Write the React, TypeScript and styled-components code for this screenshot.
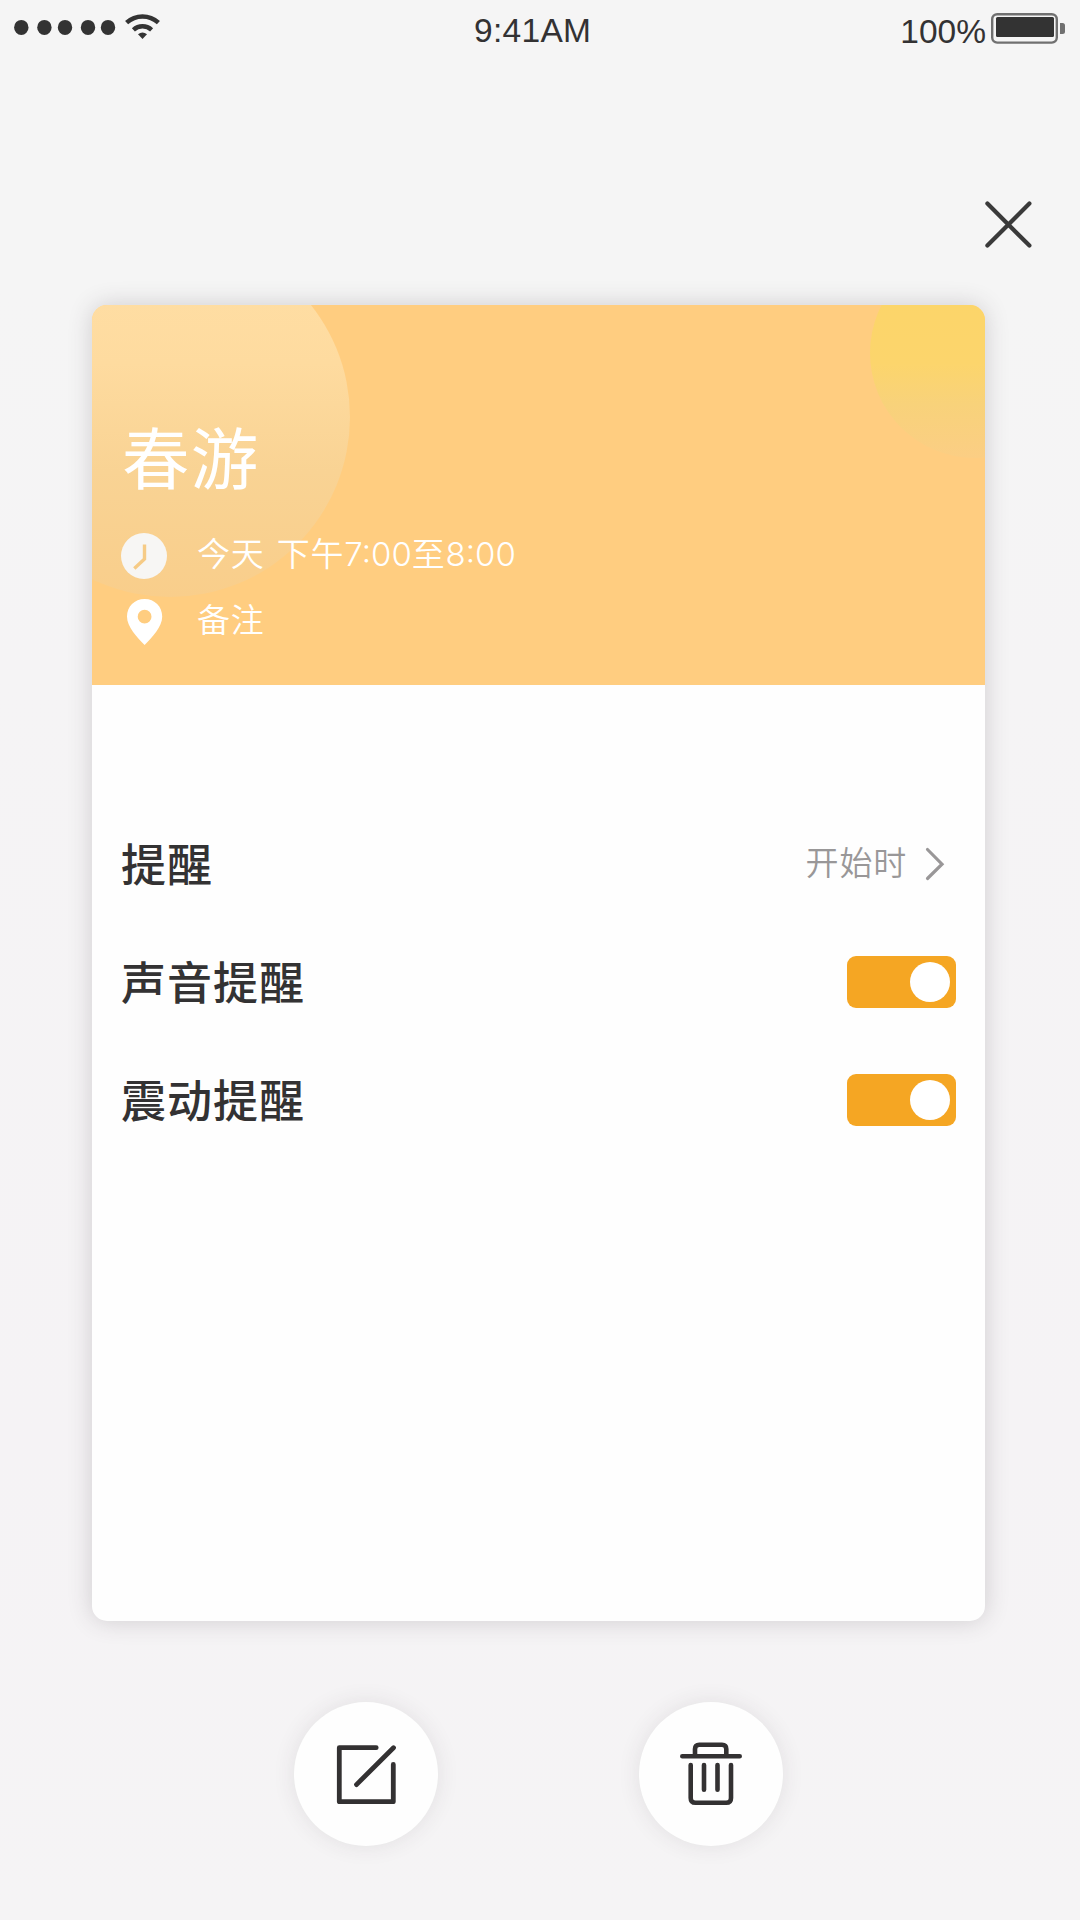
import React, { useState } from "react";
import styled, { createGlobalStyle } from "styled-components";

const GlobalStyle = createGlobalStyle`
  *, *::before, *::after { box-sizing: border-box; }
  body { margin: 0; background: #f5f5f5; }
  button { font: inherit; color: inherit; border: 0; padding: 0; background: none; cursor: pointer; }
  svg { display: block; flex: none; }
`;

const Screen = styled.div`
  width: 1080px;
  height: 1920px;
  display: flex;
  flex-direction: column;
  overflow: hidden;
  color: #333233;
  background: linear-gradient(180deg, #f5f5f5 0%, #f5f5f5 15%, #f5f4f5 35%, #f5f3f5 75%, #f5f4f5 100%);
  font-family: "Noto Sans CJK SC", sans-serif;
`;

const StatusBar = styled.header`
  height: 60px;
  padding: 0 14px 0 14px;
  display: grid;
  grid-template-columns: 460px 1fr auto;
  font: 33.5px/38px "Liberation Sans", Arial, sans-serif;
`;

const Clock = styled.div`
  padding-top: 12px;
  letter-spacing: 0.3px;
`;

const BatteryGroup = styled.div`
  display: flex;
  gap: 5px;
`;

const BatteryText = styled.span`
  padding-top: 13px;
`;

const BatteryIcon = styled.svg`
  margin-top: 13px;
`;

const CloseBar = styled.div`
  height: 245px;
  padding: 141px 48px 0 0;
  display: flex;
  justify-content: flex-end;
  align-items: flex-start;
`;

const Card = styled.main`
  width: 893px;
  height: 1316px;
  margin-left: 92px;
  flex: none;
  border-radius: 15px;
  overflow: hidden;
  background: #fefefe;
  box-shadow: 0 0 24px rgba(60, 50, 60, 0.2);
`;

const Hero = styled.section`
  position: relative;
  height: 380px;
  padding: 104px 30px 0 29px;
  color: #fff;
  background: #ffcd80;
  overflow: hidden;
`;

const Bubble = styled.div<{ $size: number; $left: number; $top: number; $fill: string }>`
  position: absolute;
  width: ${(p) => p.$size}px;
  height: ${(p) => p.$size}px;
  left: ${(p) => p.$left}px;
  top: ${(p) => p.$top}px;
  border-radius: 50%;
  background: ${(p) => p.$fill};
`;

const HeroContent = styled.div`
  position: relative;
  display: flex;
  flex-direction: column;
`;

const Title = styled.h1`
  margin: 0 0 22px;
  padding-left: 1px;
  font-size: 67.5px;
  line-height: 92px;
  font-weight: 400;
  letter-spacing: 1.3px;
`;

const Detail = styled.div`
  height: 66px;
  display: grid;
  grid-template-columns: 46px 1fr;
  column-gap: 30px;
  align-items: center;
`;

const DetailText = styled.span`
  padding-bottom: 8px;
  font-size: 33px;
  line-height: 48px;
  font-weight: 350;
  letter-spacing: 0.8px;
  word-spacing: 4px;
`;

const Digits = styled.span`
  font-family: Inter, sans-serif;
  font-weight: 300;
  line-height: 1;
  letter-spacing: 0;
`;

const Settings = styled.section`
  padding: 120px 29px 0;
`;

const Row = styled.div`
  height: 118px;
  display: flex;
  align-items: center;
  justify-content: space-between;
`;

const Label = styled.span`
  padding-bottom: 2px;
  font-size: 45px;
  line-height: 60px;
  font-weight: 500;
  letter-spacing: 1px;
`;

const Picker = styled.button`
  padding-right: 11px;
  display: flex;
  align-items: center;
  gap: 18px;
  color: #999798;
`;

const PickerValue = styled.span`
  padding-bottom: 6px;
  font-size: 33px;
  line-height: 48px;
  font-weight: 350;
  letter-spacing: 0.8px;
`;

const Switch = styled.button<{ $on: boolean }>`
  width: 109px;
  height: 52px;
  padding: 6px;
  display: flex;
  justify-content: ${(p) => (p.$on ? "flex-end" : "flex-start")};
  border-radius: 9px;
  background: ${(p) => (p.$on ? "#f5a623" : "#d0d0d0")};
`;

const Knob = styled.span`
  width: 40px;
  height: 40px;
  border-radius: 50%;
  background: #fff;
`;

const Actions = styled.footer`
  padding: 81px 0 0 294px;
  display: flex;
  gap: 201px;
`;

const RoundButton = styled.button`
  width: 144px;
  height: 144px;
  display: flex;
  align-items: center;
  justify-content: center;
  border-radius: 50%;
  background: #fefefe;
  box-shadow: 0 0 22px rgba(60, 50, 60, 0.1);
`;

function Signal() {
  return (
    <svg width="150" height="44" viewBox="14 0 150 44" fill="#333">
      {[21.3, 44.4, 65, 88, 108].map((x) => (
        <ellipse key={x} cx={x} cy="27.4" rx="7.2" ry="7.5" />
      ))}
      <g fill="none" stroke="#333" strokeWidth="4.5">
        <path d="M126.600 22.600a23.500 23.500 0 0 1 31.800 0" />
        <path d="M133.400 29.800a13.600 13.600 0 0 1 18.200 0" />
      </g>
      <path d="M138 34.300q4.500-3.800 9 0l-4.500 4.700z" />
    </svg>
  );
}

function Battery() {
  return (
    <BatteryIcon width="75" height="32" viewBox="0 0 75 32">
      <rect x="1.2" y="1.2" width="64.6" height="28.4" rx="5" fill="none" stroke="#707070" strokeWidth="2.4" />
      <rect x="5" y="4" width="58" height="20" rx="1.5" fill="#333" />
      <path d="M69 10h2.500q2.500 0 2.500 2.500v6q0 2.500-2.500 2.500H69z" fill="#707070" />
    </BatteryIcon>
  );
}

function Toggle({ label }: { label: string }) {
  const [on, setOn] = useState(true);
  return (
    <Row>
      <Label>{label}</Label>
      <Switch $on={on} role="switch" aria-checked={on} onClick={() => setOn(!on)}>
        <Knob />
      </Switch>
    </Row>
  );
}

export default function App() {
  return (
    <>
      <GlobalStyle />
      <Screen>
        <StatusBar>
          <Signal />
          <Clock>9:41AM</Clock>
          <BatteryGroup>
            <BatteryText>100%</BatteryText>
            <Battery />
          </BatteryGroup>
        </StatusBar>
        <CloseBar>
          <button>
            <svg width="47" height="47" viewBox="0 0 47 47" stroke="#3a3a3a" strokeWidth="4.2" strokeLinecap="round">
              <path d="M2.400 2.600l42 42M44.400 2.600l-42 42" />
            </svg>
          </button>
        </CloseBar>
        <Card>
          <Hero>
            <Bubble
              $size={360}
              $left={-102}
              $top={-68}
              $fill="linear-gradient(180deg, #ffdfa6 0%, #fedb9f 35%, #f9d394 65%, #f9ce8b 100%)"
            />
            <Bubble
              $size={210}
              $left={778}
              $top={-57}
              $fill="linear-gradient(180deg, #fcd567 0%, #fcd56c 55%, #f8d27a 74%, #fbce84 100%)"
            />
            <HeroContent>
              <Title>春游</Title>
              <Detail>
                <svg width="46" height="46" viewBox="0 0 46 46">
                  <circle cx="23" cy="23" r="23" fill="#f7f6f4" />
                  <path d="M23.500 11.500v14.600l-10.200 9.300" fill="none" stroke="#f6cb86" strokeWidth="3.400" />
                </svg>
                <DetailText>
                  今天 下午<Digits>7:00</Digits>至<Digits>8:00</Digits>
                </DetailText>
              </Detail>
              <Detail>
                <svg width="46" height="46" viewBox="0 0 46 46">
                  <path
                    d="M23.600 0C13.500 0 6 7.500 6 17.500c0 10.500 10 20.500 17.600 28.500C31.200 38 41.200 28 41.200 17.500 41.200 7.500 33.700 0 23.600 0zm0 10.800a6.900 6.900 0 1 1 0 13.800 6.900 6.900 0 0 1 0-13.800z"
                    fill="#fff"
                    fillRule="evenodd"
                  />
                </svg>
                <DetailText>备注</DetailText>
              </Detail>
            </HeroContent>
          </Hero>
          <Settings>
            <Row>
              <Label>提醒</Label>
              <Picker>
                <PickerValue>开始时</PickerValue>
                <svg width="20" height="34" viewBox="0 0 20 34" fill="none" stroke="#999798" strokeWidth="3.200" strokeLinecap="round">
                  <path d="M2.500 2.500L17 17.200 2.500 31.500" />
                </svg>
              </Picker>
            </Row>
            <Toggle label="声音提醒" />
            <Toggle label="震动提醒" />
          </Settings>
        </Card>
        <Actions>
          <RoundButton aria-label="edit">
            <svg width="60" height="60" viewBox="0 0 60 60" fill="none" stroke="#333132" strokeWidth="4.800" strokeLinecap="round" strokeLinejoin="round">
              <path d="M40.200 3.700H3.300V57.700H57.300V20.500M57.500 3.700L20.500 40.600" />
            </svg>
          </RoundButton>
          <RoundButton aria-label="delete">
            <svg width="64" height="64" viewBox="0 1.500 64 64" fill="none" stroke="#333132" strokeWidth="4.600" strokeLinecap="round">
              <path d="M3.300 15.800H60.700M16 15V8.500q0-4.300 4.300-4.300H43q4.300 0 4.300 4.300V15M11.700 24.500V57.500q0 4.800 4.800 4.800H47.200q4.800 0 4.800-4.800V24.500M25 24.500V49.300M38.500 24.500V49.300" />
            </svg>
          </RoundButton>
        </Actions>
      </Screen>
    </>
  );
}
